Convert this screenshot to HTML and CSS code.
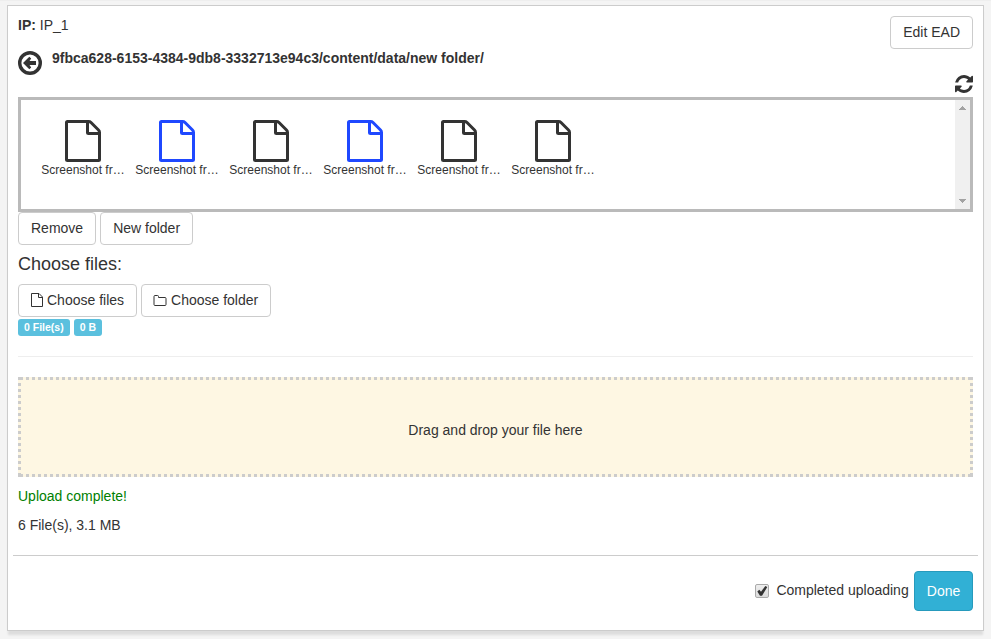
FILE: index.html
```html
<!DOCTYPE html>
<html lang="en">
<head>
<meta charset="utf-8">
<title>Upload files</title>
<link rel="stylesheet" href="styles.css">
</head>
<body>
<svg class="defs" width="0" height="0">
  <symbol id="file" viewBox="0 0 36 42"><path d="M2.500 1.500H23.500Q25 1.500 26 2.500L33.500 10Q34.500 11 34.500 12.500V39.500Q34.500 40.500 33.500 40.500H2.500Q1.500 40.500 1.500 39.500V2.500Q1.500 1.500 2.500 1.500ZM22.500 2V12.500Q22.500 13.500 23.500 13.500H34"/></symbol>
</svg>
<main class="panel">
  <header class="top">
    <div>
      <p class="ip"><b>IP:</b> IP_1</p>
      <div class="path">
        <svg class="back" viewBox="0 0 24 24"><circle cx="12" cy="12" r="10.3"/><path d="M5 12 11.300 5.700 13.200 7.500 11.500 10H18V14H11.500L13.200 16.500 11.300 18.300Z"/></svg>
        <b>9fbca628-6153-4384-9db8-3332713e94c3/content/data/new folder/</b>
      </div>
    </div>
    <div class="tools">
      <button class="btn">Edit EAD</button>
      <svg class="refresh" viewBox="128 128 1536 1536"><path d="M1639 1056q0 5-1 7-64 268-268 434.500t-478 166.500q-146 0-282.500-55t-243.500-157l-129 129q-19 19-45 19t-45-19-19-45v-448q0-26 19-45t45-19h448q26 0 45 19t19 45-19 45l-137 137q71 66 161 102t187 36q134 0 250-65t186-179q11-17 53-117 8-23 30-23h192q13 0 22.500 9.500t9.500 22.500zm25-800v448q0 26-19 45t-45 19h-448q-26 0-45-19t-19-45 19-45l138-138q-148-137-349-137-134 0-250 65t-186 179q-11 17-53 117-8 23-30 23h-199q-13 0-22.500-9.500t-9.500-22.500v-7q65-268 270-434.500t480-166.500q146 0 284 55.500t245 156.500l130-129q19-19 45-19t45 19 19 45z"/></svg>
    </div>
  </header>
  <section class="browser">
    <div class="files">
      <div class="file"><svg><use href="#file"/></svg><span>Screenshot fr…</span></div>
      <div class="file selected"><svg><use href="#file"/></svg><span>Screenshot fr…</span></div>
      <div class="file"><svg><use href="#file"/></svg><span>Screenshot fr…</span></div>
      <div class="file selected"><svg><use href="#file"/></svg><span>Screenshot fr…</span></div>
      <div class="file"><svg><use href="#file"/></svg><span>Screenshot fr…</span></div>
      <div class="file"><svg><use href="#file"/></svg><span>Screenshot fr…</span></div>
    </div>
    <div class="scrollbar">
      <svg viewBox="0 0 7 4"><path d="M3 0h1v1h1v1h1v1h1v1H0V3h1V2h1V1h1z"/></svg>
      <svg viewBox="0 0 7 4"><path d="M0 0h7v1H6v1H5v1H4v1H3V3H2V2H1V1H0z"/></svg>
    </div>
  </section>
  <div class="row"><button class="btn">Remove</button><button class="btn">New folder</button></div>
  <h4>Choose files:</h4>
  <div class="row">
    <button class="btn icon"><svg class="small-file" viewBox="0 0 12 14"><path d="M.5.5H8L11.500 4V13.500H.5ZM7.500.5V4.500H11.500"/></svg>Choose files</button>
    <button class="btn icon"><svg class="small-folder" viewBox="0 0 13 11"><path d="M1.500.5H4Q5 .5 5 1.500V2.500H11.500Q12.500 2.500 12.500 3.500V9.500Q12.500 10.500 11.500 10.500H1.500Q.5 10.500.5 9.500V1.500Q.5.5 1.500.5Z"/></svg>Choose folder</button>
  </div>
  <div class="row labels"><span class="label">0 File(s)</span><span class="label">0 B</span></div>
  <hr>
  <div class="drop">Drag and drop your file here</div>
  <p class="complete">Upload complete!</p>
  <p class="total">6 File(s), 3.1 MB</p>
  <footer>
    <span class="check"><svg viewBox="0 0 14 14"><path d="M2.300 7.500 4.300 5.800 6 7.800 10.300 2 12.300 3 7 11.700H5Z"/></svg></span>
    <span>Completed uploading</span>
    <button class="done">Done</button>
  </footer>
</main>
</body>
</html>
```
FILE: styles.css
```css
* { box-sizing: border-box; }
body { margin: 0; height: 639px; overflow: hidden; padding: 5px 7px; background: #f4f4f4; color: #333; font: 14px/20px "Liberation Sans", Arial, sans-serif; box-shadow: inset 0 1px #eee; }
p, h4 { margin: 0; }
.defs { display: block; height: 0; }
.panel { height: 626px; padding: 9px 10px 0; background: #fff; border: 1px solid #ccc; box-shadow: 0 5px 2px -1px #ddd; }
.top { display: flex; justify-content: space-between; height: 82px; }
.path { display: flex; gap: 10px; margin-top: 13px; }
.back { width: 24px; height: 24px; margin-top: 3px; fill: #333; }
.back circle { fill: none; stroke: #333; stroke-width: 3.4; }
.tools { display: flex; flex-direction: column; align-items: flex-end; }
.tools .btn { margin-top: 1px; }
.refresh { width: 18px; height: 18px; margin-top: 26px; fill: #333; }
.btn { height: 33px; padding: 0 12px 1px; color: #333; background: #fff; border: 1px solid #ccc; border-radius: 4px; font: inherit; }
.browser { display: flex; justify-content: space-between; height: 115px; border: 3px solid #bababa; }
.files { display: flex; padding: 20px 0 0 15px; }
.file { width: 94px; padding: 0 5px; font-size: 12px; color: #333; }
.file svg { display: block; width: 36px; height: 42px; margin-left: 24px; fill: none; stroke: #333; stroke-width: 3; }
.file span { display: block; padding-left: .3px; line-height: 17px; white-space: nowrap; }
.file.selected svg { stroke: #1f48ff; }
.scrollbar { display: flex; flex-direction: column; justify-content: space-between; align-items: center; width: 15px; padding: 6px 0; background: #f0f0f0; }
.scrollbar svg { width: 7px; height: 4px; fill: #a3a3a3; }
.row { display: flex; gap: 4px; }
h4 { margin: 9px 0 10px; font-size: 18px; font-weight: 400; line-height: 20px; }
.icon { display: flex; align-items: center; gap: 4px; }
.icon svg { fill: none; stroke: #333; }
.small-file { width: 12px; height: 14px; }
.small-folder { width: 14px; height: 11px; margin-left: -1px; }
.labels { margin-top: 2px; }
.label { height: 17px; padding: 0 6px; color: #fff; background: #5bc0de; border-radius: 3px; font-size: 10.5px; font-weight: 700; line-height: 17px; }
hr { margin: 20px 0; border: 0; border-top: 1px solid #eee; }
.drop {
  height: 100px; padding-top: 43px; text-align: center; background-color: #fef7e3;
  background-image: linear-gradient(#ccc, #ccc), linear-gradient(#ccc, #ccc), linear-gradient(#ccc, #ccc), linear-gradient(#ccc, #ccc),
    repeating-linear-gradient(90deg, transparent 0 2px, #ccc 2px 5px, transparent 5px 6px), repeating-linear-gradient(90deg, transparent 0 2px, #ccc 2px 5px, transparent 5px 6px),
    repeating-linear-gradient(#ccc 0 3px, transparent 3px 6px), repeating-linear-gradient(#ccc 0 3px, transparent 3px 6px);
  background-repeat: no-repeat;
  background-position: 0 0, 100% 0, 0 100%, 100% 100%, 0 0, 0 100%, 0 0, 100% 0;
  background-size: 3px 3px, 3px 3px, 3px 3px, 3px 3px, 100% 3px, 100% 3px, 3px 100%, 3px 100%;
}
.complete { margin-top: 9px; color: green; }
.total { margin-top: 9px; }
footer { display: flex; align-items: center; justify-content: flex-end; height: 71px; margin: 20px -5px 0; padding: 0 5px; border-top: 1px solid #ccc; }
footer span + span { margin: -2px 5.3px 0 7.3px; }
.check { width: 14px; height: 14px; border: 1px solid #aaa; border-radius: 2px; background: linear-gradient(#eee, #dcdcdc); }
.check svg { display: block; width: 14px; height: 14px; margin: -1px; fill: #333; }
.done { width: 59px; height: 40px; padding: 0; color: #fff; background: #31b0d5; border: 1px solid #269abc; border-radius: 4px; font: inherit; }
```
